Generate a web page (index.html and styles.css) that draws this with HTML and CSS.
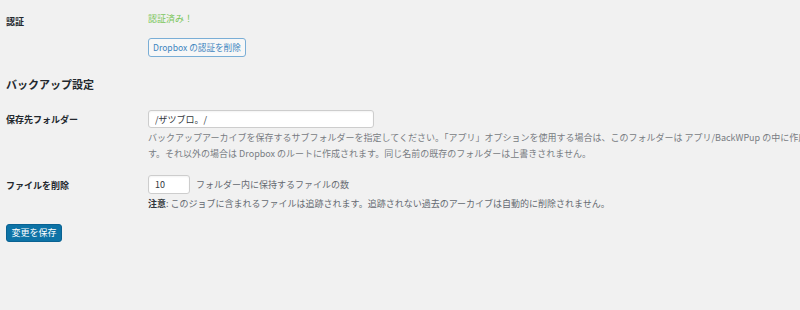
FILE: index.html
```html
<!DOCTYPE html>
<html lang="ja">
<head>
  <meta charset="UTF-8">
  <title>Dropbox 設定</title>
  <link rel="stylesheet" href="styles.css">
</head>
<body>
  <div class="settings">

    <div class="form-row auth-row">
      <div class="row-label">認証</div>
      <div class="row-field">
        <div class="auth-ok">認証済み！</div>
        <button class="btn-secondary" type="button">Dropbox の認証を削除</button>
      </div>
    </div>

    <h2 class="section-title">バックアップ設定</h2>

    <div class="form-row folder-row">
      <div class="row-label">保存先フォルダー</div>
      <div class="row-field">
        <input class="text-input" type="text" value="/ザツブロ。/">
        <p class="description">バックアップアーカイブを保存するサブフォルダーを指定してください。「アプリ」オプションを使用する場合は、このフォルダーは アプリ/BackWPup の中に作成されま<br>す。それ以外の場合は Dropbox のルートに作成されます。同じ名前の既存のフォルダーは上書きされません。</p>
      </div>
    </div>

    <div class="form-row delete-row">
      <div class="row-label">ファイルを削除</div>
      <div class="row-field">
        <div class="inline-field">
          <input class="number-input" type="text" value="10">
          <span class="inline-text">フォルダー内に保持するファイルの数</span>
        </div>
        <p class="note"><strong>注意</strong>: このジョブに含まれるファイルは追跡されます。追跡されない過去のアーカイブは自動的に削除されません。</p>
      </div>
    </div>

    <button class="btn-primary" type="submit">変更を保存</button>
  </div>
</body>
</html>
```

FILE: styles.css
```css
html, body {
  margin: 0;
  background: #f1f1f1;
  overflow: hidden;
}

body {
  font-family: "Noto Sans CJK JP", "Noto Sans", sans-serif;
  font-size: 9px;
  line-height: 16px;
  color: #23282d;
}

.settings {
  padding: 0 6px;
}

.form-row {
  display: flex;
}

.row-label {
  width: 142px;
  flex-shrink: 0;
  font-weight: bold;
  font-size: 9px;
}

.row-field {
  flex: 1;
  min-width: 0;
}

/* auth */
.auth-row .row-label { padding-top: 14px; }
.auth-row .row-field { padding-top: 11px; }

.auth-ok {
  color: #7ac65a;
}

.btn-secondary {
  display: block;
  margin-top: 11px;
  height: 19px;
  padding: 0 4px;
  font-family: inherit;
  font-size: 8.6px;
  line-height: 17px;
  color: #3d85bf;
  background: #f7f7f7;
  border: 1px solid #7aaed6;
  border-radius: 3px;
}

.section-title {
  margin: 19px 0 0;
  font-size: 11px;
  line-height: 16px;
  font-weight: bold;
  color: #23282d;
}

/* folder */
.folder-row .row-label { padding-top: 20px; }
.folder-row .row-field { padding-top: 18px; }

.text-input, .number-input {
  display: block;
  box-sizing: border-box;
  margin: 0;
  padding: 0 6px;
  font-family: inherit;
  font-size: 9px;
  color: #32373c;
  background: #fff;
  border: 1px solid #cdcdcd;
  border-radius: 3px;
  box-shadow: inset 0 1px 2px rgba(0, 0, 0, 0.05);
}

.text-input {
  width: 226px;
  height: 18px;
}

.description {
  margin: 2px 0 0;
  color: #787c82;
  white-space: nowrap;
}

/* delete */
.delete-row .row-label { padding-top: 16px; }
.delete-row .row-field { padding-top: 13px; }

.inline-field {
  display: flex;
  align-items: center;
  gap: 6px;
}

.number-input {
  width: 42px;
  height: 19px;
}

.inline-text {
  color: #646970;
}

.note {
  margin: 2px 0 0;
  color: #646970;
  white-space: nowrap;
}

.note strong {
  color: #32373c;
}

.btn-primary {
  display: block;
  margin-top: 12px;
  height: 18px;
  width: 56px;
  padding: 0;
  font-family: inherit;
  font-size: 9px;
  line-height: 16px;
  color: #fff;
  background: #0d73a6;
  border: 1px solid #0a6292;
  border-radius: 3px;
}
```
